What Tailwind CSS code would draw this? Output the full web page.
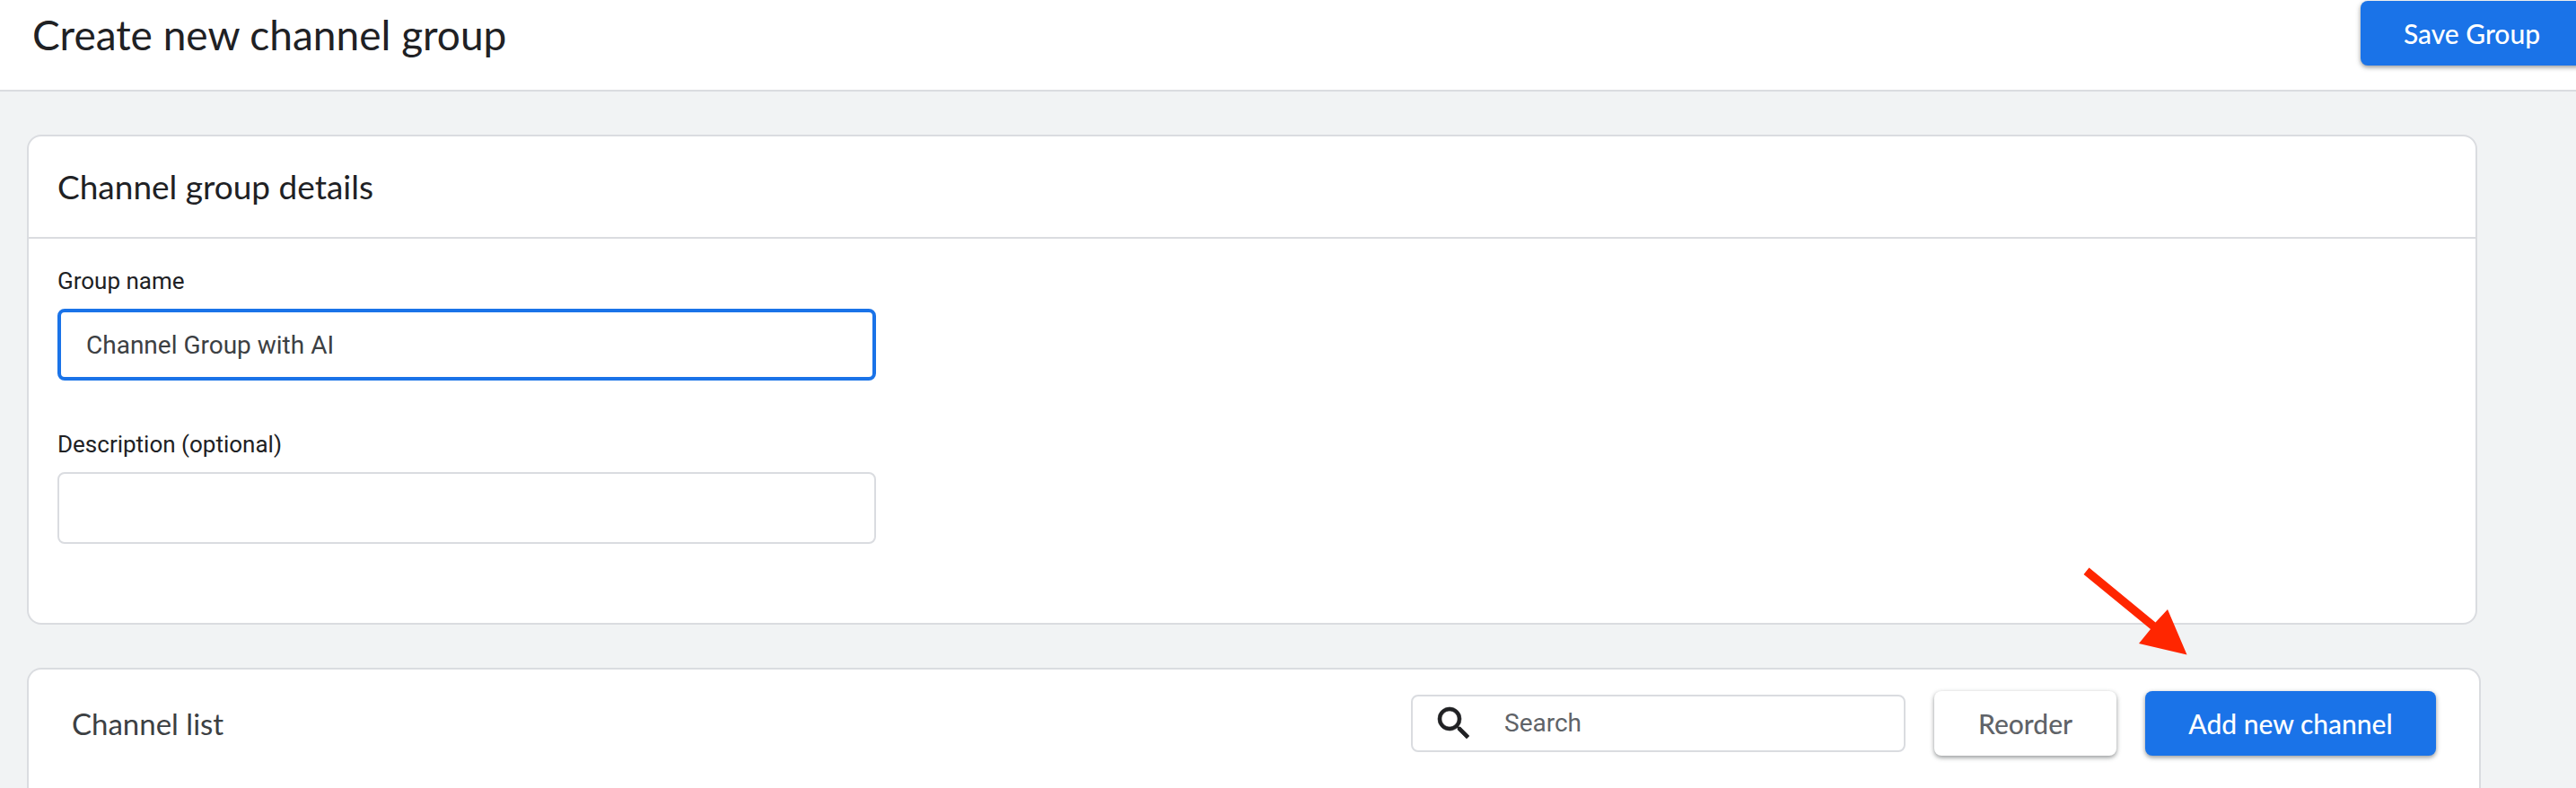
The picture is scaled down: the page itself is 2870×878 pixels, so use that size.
<!DOCTYPE html>
<html lang="en">
<head>
<meta charset="utf-8">
<meta name="viewport" content="width=device-width, initial-scale=1">
<title>Create new channel group</title>
<script src="https://cdn.jsdelivr.net/npm/@tailwindcss/browser@4"></script>
</head>
<body class="relative flex min-h-screen flex-col overflow-x-hidden bg-[#f1f3f4] font-[Roboto,sans-serif] text-[#202124]">
  <header class="flex items-start justify-between overflow-hidden border-b-2 border-[#dadce0] bg-white pt-px pb-[27px] pl-9">
    <h1 class="pt-2.5 font-[Lato,sans-serif] text-[46px] leading-[56px]">Create new channel group</h1>
    <button type="button" class="-mr-2 h-18 w-[248px] shrink-0 rounded-lg bg-[#1a73e8] font-[Lato,sans-serif] text-[30px] font-medium text-white shadow-[0_2px_4px_rgba(60,64,67,0.4),0_2px_6px_rgba(60,64,67,0.2)]">Save Group</button>
  </header>

  <main class="flex flex-1 flex-col gap-12 pt-12 pr-[106px] pl-[30px]">
    <section class="mr-1 rounded-2xl border-2 border-[#dadce0] bg-white">
      <h2 class="border-b-2 border-[#dadce0] px-8 py-8 font-[Lato,sans-serif] text-[37px] leading-[48px]">Channel group details</h2>
      <form class="flex flex-col gap-12 px-8 pt-7 pb-[88px]">
        <div class="flex flex-col gap-3">
          <label for="name" class="text-[26px] leading-[38px]">Group name</label>
          <input id="name" type="text" value="Channel Group with AI" class="h-20 w-full max-w-[912px] rounded-lg border-4 border-[#1a73e8] px-7 text-[28px] text-[#3c4043] outline-none">
        </div>
        <div class="flex flex-col gap-3">
          <label for="description" class="pt-1 text-[26px] leading-[38px]">Description (optional)</label>
          <input id="description" type="text" class="h-20 w-full max-w-[912px] rounded-lg border-2 border-[#dadce0] px-7 text-[28px] text-[#3c4043] outline-none">
        </div>
      </form>
    </section>

    <section class="flex flex-1 items-start rounded-t-2xl border-2 border-b-0 border-[#dadce0] bg-white pt-6 pr-12 pb-9 pl-12">
      <div class="flex w-full items-center gap-8">
        <h2 class="mr-auto font-[Lato,sans-serif] text-[33px] leading-[40px] text-[#3c4043]">Channel list</h2>
        <label class="flex h-16 w-[551px] items-center gap-8 rounded-lg border-2 border-[#dadce0] px-[22px]">
          <svg class="size-12 shrink-0" viewBox="0 0 24 24" fill="currentColor" stroke="currentColor" stroke-width=".3" aria-hidden="true"><path d="M15.500 14h-.79l-.28-.27A6.471 6.471 0 0 0 16 9.500 6.500 6.500 0 1 0 9.500 16c1.610 0 3.090-.59 4.230-1.570l.27.28v.79l5 4.990L20.490 19l-4.990-5zm-6 0C7.010 14 5 11.990 5 9.500S7.010 5 9.500 5 14 7.010 14 9.500 11.990 14 9.500 14z"/></svg>
          <input type="search" placeholder="Search" aria-label="Search" class="w-full min-w-0 text-[28px] text-[#3c4043] outline-none placeholder:text-[#5f6368]">
        </label>
        <button type="button" class="h-18 w-[203px] shrink-0 rounded-lg bg-white font-[Lato,sans-serif] text-[30px] font-medium text-[#5f6368] shadow-[0_2px_4px_rgba(60,64,67,0.4),0_2px_6px_rgba(60,64,67,0.2)]">Reorder</button>
        <button type="button" class="h-18 w-[324px] shrink-0 rounded-lg bg-[#1a73e8] font-[Lato,sans-serif] text-[30px] font-medium text-white shadow-[0_2px_4px_rgba(60,64,67,0.4),0_2px_6px_rgba(60,64,67,0.2)]">Add new channel</button>
      </div>
    </section>
  </main>

  <svg class="pointer-events-none absolute top-[630px] right-[430px] h-[102px] w-[120px]" viewBox="0 0 120 102" fill="#ff2600" aria-hidden="true"><path d="M7.500 2.500 81.500 63.500 95 49 116.500 99.500 63 87 76 71 1.500 10z"/></svg>
</body>
</html>
